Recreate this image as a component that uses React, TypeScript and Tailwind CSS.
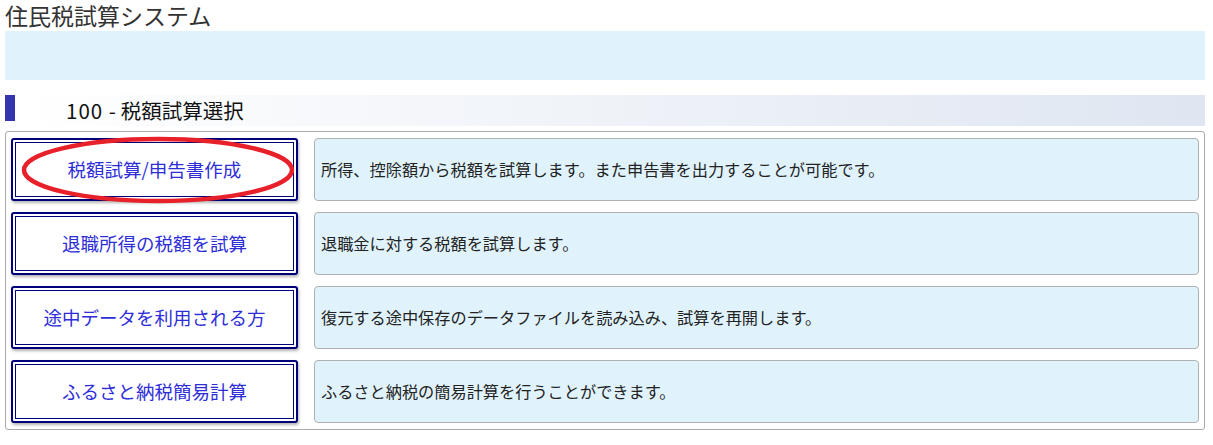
const MENU = [
  { label: "税額試算/申告書作成", text: "所得、控除額から税額を試算します。また申告書を出力することが可能です。" },
  { label: "退職所得の税額を試算", text: "退職金に対する税額を試算します。" },
  { label: "途中データを利用される方", text: "復元する途中保存のデータファイルを読み込み、試算を再開します。" },
  { label: "ふるさと納税簡易計算", text: "ふるさと納税の簡易計算を行うことができます。" },
];

export default function App() {
  return (
    <div
      className="w-[1213px] h-[445px] bg-white pl-[5px] pr-[8px]"
      style={{ fontFamily: '"Noto Sans CJK JP", "Noto Sans", sans-serif' }}
    >
      <h1 className="h-[31px] pt-[1px] text-[23px] leading-[28px] text-[#333]">住民税試算システム</h1>
      <div className="h-[49px] bg-[#e0f3fd]" />

      <div className="mt-[15px] flex h-[26px]">
        <div className="w-[10px] bg-[#3535b0]" />
        <div className="flex flex-1 flex-col">
          <div className="flex flex-1 items-center bg-gradient-to-r from-white to-[#dfe6f1] pl-[51px] text-[20.5px] text-[#111]">
            <span className="tracking-[1px]">100 - </span>
            <span className="ml-[4px]">税額試算選択</span>
          </div>
          <div className="h-[2px] bg-gradient-to-r from-[#3535b0] to-[#c4d0fa]" />
        </div>
      </div>

      <div className="mt-[10px] flex flex-col gap-[11px] rounded-[3px] border border-[#aaa] pl-[5px] pr-[5px] pt-[6px] pb-[6px]">
        {MENU.map((m, i) => (
          <div key={m.label} className="relative flex h-[63px] gap-[16px]">
            <button className="w-[287px] rounded-[3px] border-2 border-[#00007a] bg-white p-[2px] shadow-[1px_2px_3px_rgba(0,0,0,0.3)]">
              <span className="flex h-full items-center justify-center border border-[#00007a] text-[18.5px] text-[#2e2ed8]">
                {m.label}
              </span>
            </button>
            <div className="flex flex-1 items-center rounded-[4px] border border-[#b0b0b0] bg-[#e0f3fd] pl-[6px] text-[16.2px] text-[#222]">
              {m.text}
            </div>
            {i === 0 && (
              <svg className="pointer-events-none absolute left-[9px] top-[-3px]" width="276" height="70" viewBox="0 0 276 70">
                <ellipse cx="138" cy="35" rx="134" ry="31" fill="none" stroke="#e8202a" strokeWidth="4.5" />
              </svg>
            )}
          </div>
        ))}
      </div>
    </div>
  );
}
